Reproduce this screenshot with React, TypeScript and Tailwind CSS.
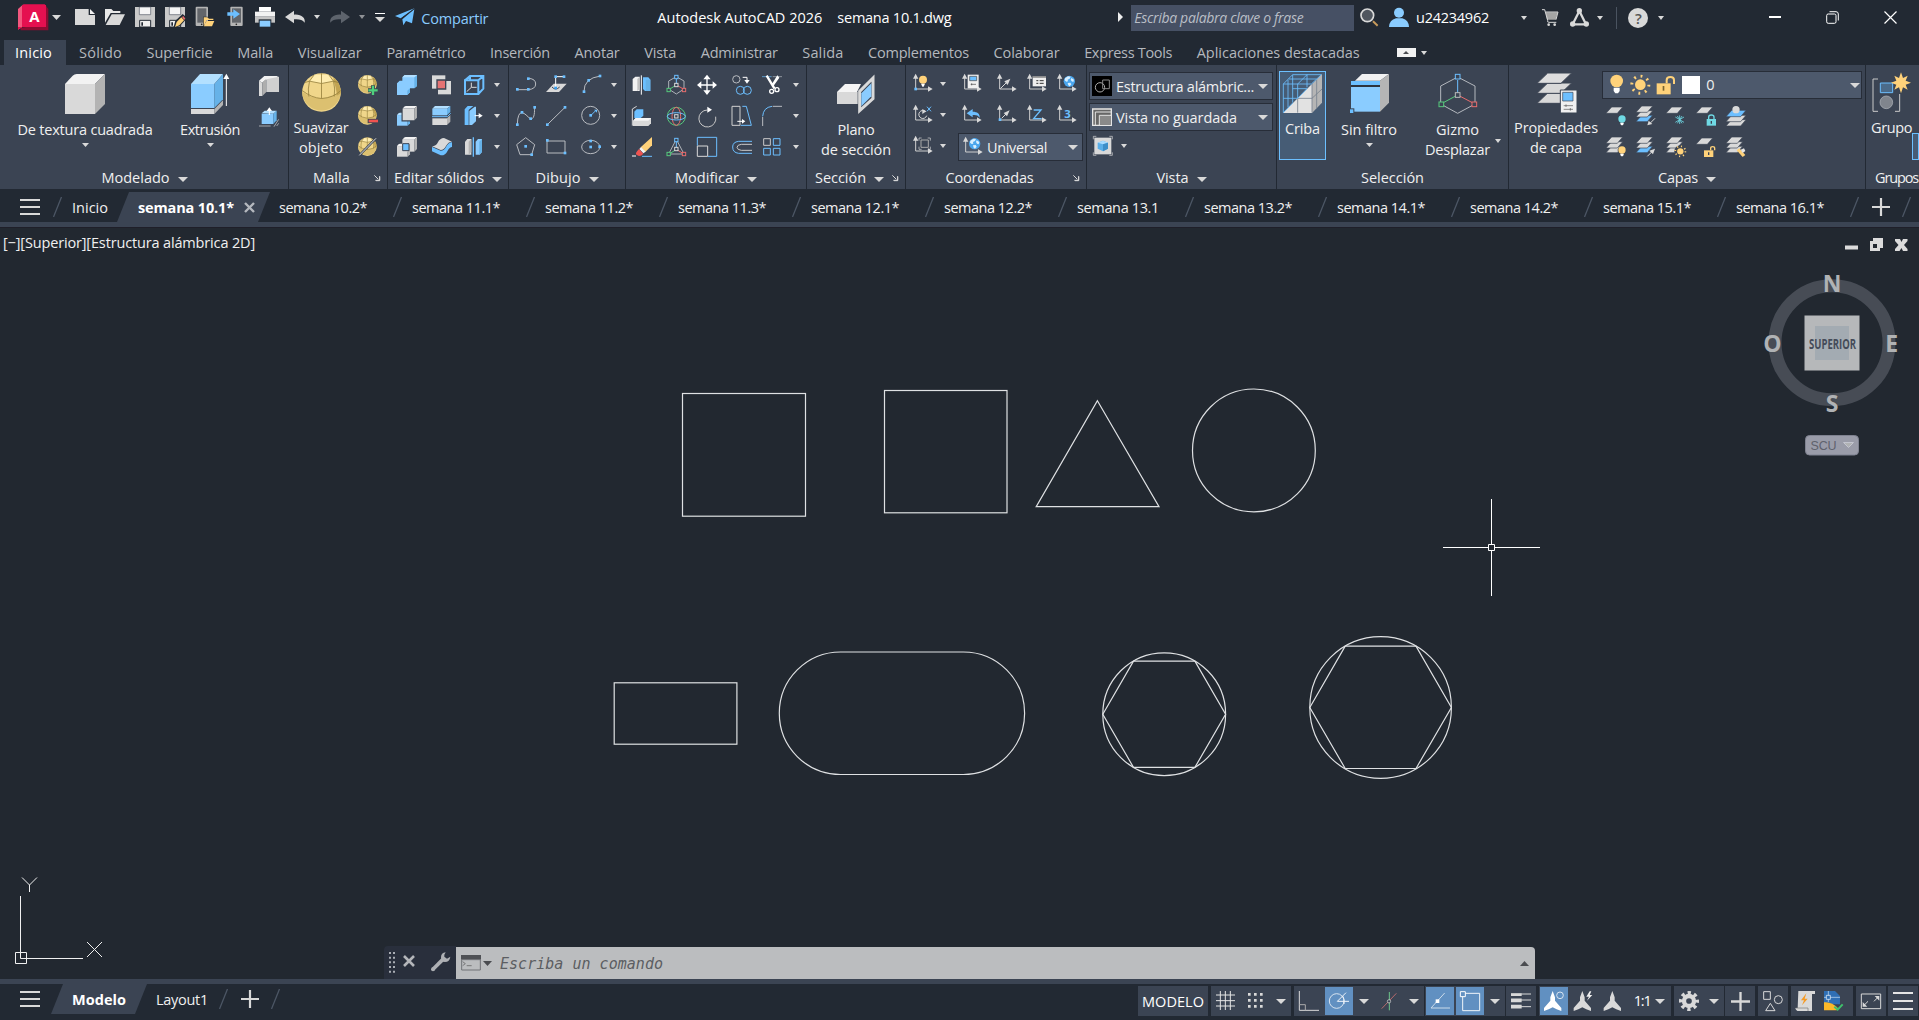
import { useLayoutEffect, useRef } from "react";
import type { ReactNode } from "react";

const G = "#d9d9d9";
const B = "#8accff";
const S = "#6cbfff";
const Y = "#ffd27a";
const R = "#e86c6c";
const N = "#56c97c";

/* Text set to an exact advance width through letter spacing. */
function Fit({ w, className = "", children }: { w: number; className?: string; children: string }) {
  const ref = useRef<HTMLSpanElement>(null);
  useLayoutEffect(() => {
    const el = ref.current;
    if (!el) return;
    el.style.letterSpacing = "0px";
    const natural = el.getBoundingClientRect().width;
    el.style.letterSpacing = `${(w - natural) / children.length}px`;
  }, [w, children]);
  return (
    <span ref={ref} className={"inline-block shrink-0 whitespace-pre " + className}>
      {children}
    </span>
  );
}

/* Icon drawn on a grid three times finer than the page. */
function K({ x, y, w = 60, h = 60, className = "", children }: { x: number; y: number; w?: number; h?: number; className?: string; children: ReactNode }) {
  return (
    <svg width={w / 3} height={h / 3} viewBox={`${x} ${y} ${w} ${h}`} className={"shrink-0 overflow-visible " + className} fill="none" stroke="none">
      {children}
    </svg>
  );
}

function Caret({ className = "h-1 w-[7px]", up = false, dark = false }: { className?: string; up?: boolean; dark?: boolean }) {
  return (
    <svg viewBox="0 0 10 5" preserveAspectRatio="none" className={"shrink-0 " + (dark ? "fill-[#4a4c50] " : "fill-[#d9d9d9] ") + className}>
      <path d={up ? "M0 5L5 0L10 5Z" : "M0 0H10L5 5Z"} />
    </svg>
  );
}

const P = ({ d, f }: { d: string; f: string }) => <path d={d} fill={f} />;
const L = ({ d, c = G, s = 3 }: { d: string; c?: string; s?: number }) => <path d={d} stroke={c} strokeWidth={s} />;
const Dot = ({ x, y, c = S }: { x: number; y: number; c?: string }) => <rect x={x - 4} y={y - 4} width="8" height="8" fill={c} />;
const Sq = ({ x, y, c }: { x: number; y: number; c: string }) => <rect x={x - 5} y={y - 5} width="10" height="10" stroke={c} strokeWidth="3" fill="#3b4453" />;

/* ---------- title bar icons ---------- */
const Logo = () => (
  <K x={54} y={9} w={91} h={81} className="mt-px">
    <P d="M62 88H145V24L136 12V70L62 80Z" f="#8c0c32" />
    <P d="M54 24L70 10V76L54 86Z" f="#f2587f" />
    <P d="M70 10H134L138 14V78H54V86L70 76Z" f="#e51050" />
    <P d="M66 12H138V78H66Z" f="#e51050" />
    <text x="103" y="62" fontSize="45" fontWeight="700" textAnchor="middle" fill="#fff" fontFamily="Open Sans">A</text>
  </K>
);
const NewIcon = () => <K x={225} y={21}><P d="M225 27H266V45H285V75H225Z" f={G} /><P d="M270 27L285 42H270Z" f="#f2f2f2" /></K>;
const OpenIcon = () => <K x={315} y={21}><P d="M315 27H334L340 33H361V39H332L315 68Z" f="#e8e8e8" /><P d="M335 43H375L359 75H317Z" f={G} /></K>;
const SaveBody = ({ x }: { x: number }) => (
  <g>
    <path transform={`translate(${x} 21)`} d="M0 0H60V60H0Z" fill="#c9c9c9" />
    <path transform={`translate(${x} 21)`} d="M13 0H47V23H13Z" fill="#f5f5f5" stroke="#555b66" strokeWidth="2" />
    <path transform={`translate(${x} 21)`} d="M14 40H47V60H14Z" fill="#f0f0f0" stroke="#222933" strokeWidth="3" />
    <path transform={`translate(${x} 21)`} d="M19 46H24V56H19Z" fill="#222933" />
  </g>
);
const SaveIcon = () => <K x={405} y={21}><SaveBody x={405} /></K>;
const SaveAsIcon = () => (
  <K x={495} y={21}>
    <SaveBody x={495} />
    <P d="M520 84L526 62L548 42L562 54L540 78Z" f="#222933" />
    <P d="M525 81L530 66L544 52L552 61L538 76Z" f={Y} />
    <P d="M546 51L550 48L556 56L552 60Z" f={R} />
  </K>
);
const Phone = ({ x }: { x: number }) => (
  <g>
    <rect x={x} y="20" width="37" height="58" rx="3" fill="#b4b4b4" />
    <rect x={x + 5} y="25" width="27" height="43" fill="#62656a" />
    <circle cx={x + 18} cy="73" r="2.500" fill="#222" />
  </g>
);
const PhoneOpen = () => <K x={585} y={21}><Phone x={587} /><path d="M611 52H622L627 56H640V62H643L636 79H611Z" stroke="#222933" strokeWidth="4" /><P d="M611 52H622L627 56H640V60H620L611 78Z" f={Y} /><P d="M620 63H643L636 79H612Z" f={Y} /></K>;
const PhoneSave = () => <K x={675} y={21}><Phone x={691} /><P d="M682 37H700V28L720 42L700 56V47H682Z" f={S} /></K>;
const PrintIcon = () => <K x={765} y={21}><P d="M777 21H813V35H777Z" f="#fff" /><P d="M765 35H825V50H765Z" f="#f2f2f2" /><P d="M765 50H825V68H765Z" f="#c4c4c4" /><P d="M776 58H814V81H776Z" f="#222933" /><P d="M779 62H811V80H779Z" f={B} /></K>;
const UndoIcon = ({ redo = false }: { redo?: boolean }) => (
  <K x={855} y={21} className={redo ? "-scale-x-100" : ""}>
    <P d="M855 51L882 32V44C904 42 917 54 914 68C907 59 898 57 882 58V70Z" f={redo ? "#5d636c" : G} />
  </K>
);
const PlaneIcon = () => <K x={1186} y={24}><P d="M1246 27L1186 51L1203 58ZM1244 31L1208 61L1211 79L1219 66L1237 73Z" f={S} /><L d="M1246 27L1206 58" c="#222933" s={2} /></K>;

/* ---------- modelling icons ---------- */
const CubeIcon = () => <K x={195} y={222} w={120} h={120}><P d="M195 252H285V342H195Z" f={G} /><P d="M195 252L218 227Q223 222 230 222H315L285 252Z" f="#f2f2f2" /><P d="M285 252L315 222V312L285 342Z" f="#b3b3b3" /></K>;
const ExtrudeIcon = () => (
  <K x={570} y={222} w={117} h={120}>
    <P d="M570 252H640V324H570Z" f={B} /><P d="M570 252L597 222H666L640 252Z" f="#b3e0ff" /><P d="M640 252L666 222V298L640 324Z" f="#66b2e8" />
    <P d="M570 327H640V342H570Z" f={G} /><P d="M640 327L666 301V315L640 342Z" f="#b3b3b3" />
    <L d="M676 318V232" c="#fff" /><P d="M667 237L676 221L685 237Z" f="#fff" />
  </K>
);
const PolysolidIcon = () => <K x={777} y={228}><P d="M777 242L793 228H830L837 232L833 240H796L787 248Z" f="#f2f2f2" /><P d="M777 242L787 248V288H777Z" f={G} /><P d="M787 248L799 236V276L787 288Z" f="#aeaeae" /><P d="M799 238L837 230V276H799Z" f="#d0d0d0" /></K>;
const PressIcon = () => <K x={777} y={321}><P d="M785 340L794 332H830L820 341Z" f="#b3e0ff" /><P d="M785 341H820V372H785Z" f={B} /><P d="M820 341L830 332V361L820 372Z" f="#66b2e8" /><L d="M777 378H812M822 380L836 358M830 378L836 370" s={2} /><L d="M808 345V328" c="#fff" /><P d="M800 333L808 322L816 333Z" f="#fff" /></K>;
const Ball = ({ x, y, r }: { x: number; y: number; r: number }) => (
  <g transform={`translate(${x} ${y}) scale(${r / 58})`}>
    <circle r="58" fill="#f0d68a" />
    <path d="M-58 -2Q0 38 58 -6A58 58 0 0 1 -58 -2Z" fill="#dcc070" />
    <path d="M-22 -53L22 -53L36 -34L0 -27L-36 -34Z" fill="#ffedb0" />
    <path d="M36 -34Q44 -18 46 10L58 2A58 58 0 0 0 36 -46Z" fill="#c2a452" />
    <path d="M0 -58V-27V18M-58 -6Q-30 16 0 18Q36 16 58 -6M-50 -30L-36 -34L0 -27L36 -34L50 -30M-36 -34Q-42 -10 -38 12M36 -34Q42 -10 38 12M-22 -53L-36 -34M22 -53L36 -34" stroke="#98823f" strokeWidth={r > 40 ? 2.5 : 4} />
  </g>
);
const SmoothIcon = () => <K x={906} y={219} w={117} h={117}><Ball x={964.5} y={277.5} r={58} /></K>;
const BallAdd = () => <K x={1074} y={225}><Ball x={1102} y={253} r={28} /><L d="M1119 256V286M1104 271H1134" c="#3b4453" s={12} /><L d="M1119 257V285M1105 271H1133" c="#4fd07d" s={7} /></K>;
const BallSub = () => <K x={1074} y={318}><Ball x={1102} y={346} r={28} /><L d="M1103 363H1134" c="#3b4453" s={13} /><L d="M1106 363H1134" c="#ef5350" s={8} /></K>;
const BallCrease = () => <K x={1074} y={411}><Ball x={1102} y={440} r={28} /><L d="M1076 468L1130 413" c="#3b4453" s={7} /><L d="M1078 466L1128 415" c="#ddd" s={3} /></K>;

/* ---------- solid editing icons ---------- */
const Box3 = ({ x, y, s = 36, c = "b" }: { x: number; y: number; s?: number; c?: string }) => {
  const a = c === "b" ? B : G;
  const t = c === "b" ? "#b3e0ff" : "#f2f2f2";
  const d = c === "b" ? "#66b2e8" : "#b3b3b3";
  return (
    <g transform={`translate(${x} ${y}) scale(${s / 36})`}>
      <path d="M0 8H36V44H0Z" fill={a} /><path d="M0 8L5 2Q7 0 10 0H44L36 8Z" fill={t} /><path d="M36 8L44 0V36L36 44Z" fill={d} />
    </g>
  );
};
const UnionIcon = () => <K x={1191} y={225}><P d="M1207 232L1214 225H1251V258L1243 265H1230V277L1222 285H1191V250L1199 242H1207Z" f={B} /><P d="M1243 232L1251 225V258L1243 265Z" f="#66b2e8" /><P d="M1222 272L1230 265V277L1222 285Z" f="#66b2e8" /><P d="M1207 232L1214 225H1251L1243 232Z" f="#b3e0ff" /></K>;
const SubtractIcon = () => <K x={1191} y={318}><Box3 x={1191} y={338} s={32} /><path d="M1207 323L1213 318H1251V352L1243 362H1207Z" fill="#3b4453" stroke="#3b4453" strokeWidth="5" /><Box3 x={1208} y={318} s={35} c="g" /></K>;
const IntersectIcon = () => <K x={1191} y={411}><Box3 x={1207} y={411} c="g" /><Box3 x={1191} y={431} s={32} c="g" /><path d="M1208 431H1227V452H1208Z" fill={S} stroke="#3b4453" strokeWidth="3" /></K>;
const InterfereIcon = () => <K x={1296} y={225}><P d="M1296 226H1336V266H1296Z" f={G} /><P d="M1314 243H1353V283H1314Z" f={G} /><path d="M1311 240H1337V267H1311Z" fill="#e57373" stroke="#3b4453" strokeWidth="4" /></K>;
const SliceIcon = () => <K x={1296} y={318}><P d="M1297 326L1305 318H1351L1341 326Z" f="#b3e0ff" /><P d="M1297 326H1341V346H1297Z" f={B} /><P d="M1341 326L1351 318V336L1341 346Z" f="#66b2e8" /><P d="M1297 355H1341V375H1297Z" f={G} /><P d="M1341 355L1351 345V365L1341 375Z" f="#b3b3b3" /><L d="M1296 350H1342L1352 340" c={S} /></K>;
const ThickenIcon = () => <K x={1296} y={411}><P d="M1296 441L1322 452Q1333 452 1338 441Q1345 427 1356 427V441Q1349 441 1343 452Q1336 467 1322 466L1296 454Z" f={S} /><P d="M1296 439Q1308 438 1313 428Q1320 414 1332 414L1356 425Q1345 425 1338 438Q1332 450 1322 450Z" f={G} /></K>;
const WireBox = () => <K x={1392} y={225}><L d="M1395 241H1435V282H1395ZM1395 241L1410 228H1450V266L1435 282M1450 228L1435 241M1410 228V242" c={S} s={6} /><L d="M1414 248V262L1400 275M1414 262H1430" s={3} /></K>;
const FaceIcon = () => <K x={1392} y={318}><P d="M1394 328L1403 318H1420L1406 330V375H1394Z" f={S} /><P d="M1408 333L1424 320H1428V364L1416 375H1408Z" f={B} /><L d="M1424 347H1440" c="#fff" /><P d="M1436 339L1448 347L1436 355Z" f="#fff" /></K>;
const SepIcon = () => <K x={1392} y={411}><P d="M1395 425L1402 417H1414V464H1395Z" f={G} /><P d="M1406 425L1414 417V456L1406 464Z" f="#b3b3b3" /><P d="M1427 425L1434 417H1446V456L1439 464H1427Z" f={B} /><P d="M1438 425L1446 417V456L1438 464Z" f="#66b2e8" /><L d="M1420 412V470" c={S} s={4} /></K>;

/* ---------- drawing icons ---------- */
const PolylineIcon = () => <K x={47} y={228}><L d="M51 272H84Q106 270 106 255Q106 240 86 238" c="#b9bcc1" /><Dot x={51} y={271} /><Dot x={84} y={271} /><Dot x={84} y={239} /></K>;
const HelixIcon = () => <K x={137} y={228}><P d="M137 279L160 254H199L176 279Z" f={G} /><L d="M166 265V233H190" c="#fff" /><path d="M155 264Q166 276 178 264" stroke="#3b4453" strokeWidth="3" /><Dot x={166} y={267} c="#3aa0f0" /><Dot x={166} y={233} /><Dot x={191} y={233} /></K>;
const ArcIcon = () => <K x={242} y={228}><L d="M251 278Q250 238 300 231" c="#b9bcc1" /><Dot x={251} y={278} /><Dot x={265} y={244} /><Dot x={299} y={231} /></K>;
const SplineIcon = () => <K x={47} y={318}><L d="M51 373Q52 336 66 338C78 342 82 352 92 357C104 356 102 332 103 324" c="#b9bcc1" /><Dot x={51} y={374} /><Dot x={65} y={337} /><Dot x={91} y={356} /><Dot x={103} y={322} /></K>;
const LineIcon = () => <K x={137} y={318}><L d="M141 374L194 322" c="#b9bcc1" /><Dot x={141} y={374} /><Dot x={194} y={322} /></K>;
const CircleIcon = () => <K x={242} y={318}><circle cx="271" cy="346" r="27" stroke="#b9bcc1" strokeWidth="3" /><L d="M271 347L286 332" c={S} /><P d="M281 329H290V338Z" f={S} /><Dot x={271} y={346} /></K>;
const PentagonIcon = () => <K x={47} y={411}><L d="M76 413L103 434L94 464H59L49 434Z" c="#b9bcc1" /><Dot x={76} y={439} /><Dot x={94} y={464} /></K>;
const RectIcon = () => <K x={137} y={411}><L d="M140 423H194V459H140Z" c="#b9bcc1" /><Dot x={141} y={421} /><Dot x={194} y={459} /></K>;
const EllipseIcon = () => <K x={242} y={411}><ellipse cx="271" cy="441" rx="27" ry="20" stroke="#b9bcc1" strokeWidth="3" /><Dot x={271} y={441} /><Dot x={271} y={423} /><Dot x={298} y={440} /></K>;

/* ---------- modify icons ---------- */
const MirrorIcon = () => <K x={396} y={228}><P d="M398 240L406 233H419V276H398Z" f="#f2f2f2" /><P d="M412 240L419 233V270L412 276Z" f="#c0c0c0" /><P d="M429 235H445L451 242V276H435L429 270Z" f={S} /><P d="M437 242H451V276H437Z" f="#66b2e8" /><L d="M424 229V287" c="#fff" /></K>;
const GizmoSmall = () => <K x={501} y={228}><L d="M529 233L552 246V270L529 285L506 270V246Z" c="#aeb2b8" s={3} /><L d="M529 238V258" c={S} /><L d="M529 258L508 271" c={N} /><L d="M529 258L552 271" c={R} /><Sq x={529} y={234} c={S} /><Sq x={506} y={273} c={N} /><Sq x={552} y={273} c={R} /><Sq x={529} y={258} c={G} /></K>;
const GizmoBall = () => <K x={501} y={318}><circle cx="529" cy="349" r="27" stroke={N} strokeWidth="3" /><ellipse cx="529" cy="349" rx="13" ry="27" stroke={R} strokeWidth="3" /><ellipse cx="529" cy="349" rx="27" ry="11" stroke={S} strokeWidth="3" /><Sq x={529} y={349} c={G} /></K>;
const GizmoTri = () => <K x={501} y={411}><L d="M529 418L506 462H552Z" c="#aeb2b8" /><L d="M529 422V448" c={S} /><L d="M529 448L508 462" c={N} /><L d="M529 448L552 462" c={R} /><Sq x={529} y={420} c={S} /><Sq x={506} y={462} c={N} /><Sq x={552} y={462} c={R} /><Sq x={529} y={447} c={G} /></K>;
const MoveIcon = () => <K x={591} y={228}><L d="M621 236V280M600 258H642" c="#fff" s={4} /><P d="M621 227L632 241H610ZM621 288L632 274H610ZM591 258L604 247V269ZM651 258L638 247V269Z" f="#fff" /></K>;
const CopyIcon = () => <K x={696} y={228}><circle cx="709" cy="241" r="11" stroke="#b9bcc1" strokeWidth="3" /><circle cx="721" cy="274" r="12" stroke={S} strokeWidth="3" /><circle cx="742" cy="274" r="12" stroke={S} strokeWidth="3" /><L d="M728 235H741V246" c="#fff" /><P d="M733 243H749L741 254Z" f="#fff" /></K>;
const TrimIcon = () => <K x={786} y={228}><L d="M786 233H815" c={S} s={2} /><L d="M818 233H846" c="#b9bcc1" s={2} /><P d="M797 232L803 228L827 268L820 270ZM832 229L838 236L820 262L814 258Z" f="#fff" /><circle cx="815" cy="277" r="6" stroke="#fff" strokeWidth="4" /><circle cx="831" cy="272" r="6" stroke="#fff" strokeWidth="4" /></K>;
const AlignIcon = () => <K x={396} y={321}><L d="M397 380V330L410 322" /><P d="M403 338L410 331H430V350L422 357H403Z" f={S} /><P d="M399 365L407 357H453V373L445 381H399Z" f={G} /><P d="M399 365L407 357H453L445 365Z" f="#f5f5f5" /></K>;
const RotateIcon = () => <K x={591} y={318}><path d="M647 350A25.500 25.500 0 1 1 622 330" stroke="#c9c9c9" strokeWidth="3" /><P d="M622 320L636 329L622 338Z" f="#fff" /></K>;
const StretchIcon = () => <K x={696} y={321}><L d="M696 322H720V379H696Z" c="#d0d0d0" /><L d="M727 322H739L754 379H722" c={S} /><L d="M712 367H730" c="#fff" /><P d="M726 360L736 367L726 374Z" f="#fff" /></K>;
const FilletIcon = () => <K x={786} y={321}><L d="M818 322H846M788 354V381" c="#b9bcc1" /><L d="M788 352Q790 325 816 322" c={S} /></K>;
const EraseIcon = () => <K x={396} y={411}><P d="M456 411L422 442L436 456L456 436Z" f={Y} /><P d="M423 441L418 447L430 460L437 455Z" f="#f2f2f2" /><P d="M417 447Q402 462 411 465Q420 472 430 461Z" f="#ef5350" /><L d="M396 468H408" c="#fff" /><L d="M426 469H456" c={S} /></K>;
const ScaleIcon = () => <K x={591} y={411}><L d="M592 412H650V469H624M592 412V437" c={S} /><L d="M592 438H623V469H592Z" c={G} /></K>;
const OffsetIcon = () => <K x={696} y={411}><L d="M756 424H716Q698 426 698 441Q698 458 716 460H756" c={S} /><L d="M756 433H724Q712 434 711 442Q712 450 724 451H756" c="#c9c9c9" /></K>;
const ArrayIcon = () => <K x={786} y={411}><L d="M791 416H811V436H791Z" c="#c9c9c9" /><L d="M820 416H840V436H820ZM791 445H811V465H791ZM820 445H840V465H820Z" c={S} /></K>;
const SectionIcon = () => <K x={1012} y={222} w={114} h={120}><P d="M1012 276L1036 252H1084L1072 276Z" f="#f5f5f5" /><P d="M1012 276H1074V312H1012Z" f={G} /><path d="M1080 274L1120 234V296L1080 332Z" fill="#3b4453" stroke={G} strokeWidth="9" /><path d="M1085 280L1115 250V289L1085 319Z" fill={B} /></K>;

/* ---------- UCS icons ---------- */
const Axis = ({ y = 228 }: { y?: number }) => <g transform={`translate(0 ${y})`}><L d="M8 4V43H50" c="#cfcfcf" /><path d="M0 12L8 -3L16 12ZM45 35L59 43L45 51Z" fill={G} /></g>;
const U = ({ children, axis = true }: { children?: ReactNode; axis?: boolean }) => <K x={0} y={0}>{axis && <Axis y={2} />}{children}</K>;
const Globe = ({ x, y }: { x: number; y: number }) => <g><circle cx={x} cy={y} r="17" fill="#4aa6ee" /><path transform={`translate(${x} ${y})`} d="M-13 -9L-4 -15L4 -14L1 -8L-5 -5L-4 0L-9 1L-14 -3ZM6 -10L14 -5L12 2L7 0L4 -5ZM-5 5L3 4L6 9L1 15L-3 12Z" fill="#d8efff" /></g>;
const ucsRows: ReactNode[][] = [
  [
    <U><circle cx="30" cy="17" r="12" fill={Y} /><P d="M24 29H36L32 38H28Z" f="#fff" /><Dot x={8} y={45} /></U>,
    <U><P d="M17 2H50V43H17Z" f="#f0f0f0" /><path d="M23 7H44V20H23Z" fill={S} stroke="#444" strokeWidth="2" /><L d="M26 31H42M29 28V34" c="#444" s={2} /></U>,
    <U><L d="M10 44L32 22" /><P d="M40 14L22 22L32 33Z" f={G} /></U>,
    <U><P d="M17 7H57V37H17Z" f="#efefef" /><P d="M17 7H57V11H17Z" f="#777" /><L d="M28 20H34M38 20H50M28 28H34M38 28H50" c="#333" /></U>,
    <U><Globe x={37} y={22} /></U>,
  ],
  [
    <U><path d="M38 20A12 12 0 1 0 41 32" stroke="#d9d9d9" strokeWidth="3" /><P d="M28 12L40 19L28 27Z" f={G} /><L d="M42 5L54 19M54 5L42 19" c={S} /></U>,
    <U><P d="M14 25L32 12V20C46 20 54 26 53 38C47 30 42 29 32 30V37Z" f={S} /></U>,
    <U><Dot x={9} y={44} /><L d="M14 40L28 26" /><P d="M38 16L20 24L30 34Z" f={G} /></U>,
    <U><L d="M20 15H42L20 41H44" c={S} s={4} /></U>,
    <U><text x="22" y="40" fontSize="34" fontWeight="700" fill={S} fontFamily="Open Sans">3</text></U>,
  ],
  [<U><L d="M24 12H46V34H24Z" c="#aaa" /><L d="M18 14V6H26M44 6H52V14M18 32V40H26M44 40H52V32" c={G} s={2} /></U>],
];

/* ---------- view and selection icons ---------- */
const StyleIcon = () => <K x={576} y={228}><P d="M576 228H636V288H576Z" f="#000" /><circle cx="600" cy="262" r="14" stroke="#aaa" strokeWidth="3" /><L d="M608 240H628V266H608Z" c="#888" s={3} /></K>;
const ViewIcon = () => <K x={576} y={321}><P d="M576 325H636V378H576Z" f="#666" /><L d="M578 327H634V376H578Z" c="#e5e5e5" s={4} /><L d="M586 376V336H634M598 376V346H634" c="#e5e5e5" s={3} /><P d="M600 348H633V374H600Z" f="#8a8a8a" /></K>;
const CubeFrame = () => <K x={579} y={408}><P d="M583 413H634V463H583Z" f={G} /><L d="M580 418V409H589M628 409H637V418M580 457V466H589M628 466H637V457" c={G} s={2} /><P d="M593 428L609 422L624 428V446L609 454L593 446Z" f="#5aaee8" /><P d="M593 428L609 422L624 428L609 433Z" f="#a8dbff" /><P d="M609 433L624 428V446L609 454Z" f="#3d8ec8" /></K>;
const SieveIcon = () => (
  <K x={69} y={222} w={117} h={117}>
    <P d="M113 295L156 252V339H69Z" f="#e2e2e2" /><P d="M156 252L186 222V308L156 339Z" f="#b5b5b5" />
    <L d="M113 295V338M113 295H156L186 267M156 252V338M170 238V325" c="#77818e" s={2.500} />
    <L d="M70 338V252L98 224H184M70 252H154L184 224M113 294V252L141 224M98 224V308M70 295H113M70 338L98 309M86 237H170M141 224V262M84 322V240M113 295L141 266H98" c={S} s={2.500} />
  </K>
);
const FilterIcon = () => <K x={270} y={222} w={117} h={117}><P d="M285 242L306 222H387L360 242Z" f="#f2f2f2" /><P d="M360 242L387 222V308L360 335Z" f="#b5b5b5" /><P d="M273 243H360V335H273Z" f={B} /><P d="M273 243H360V255H273Z" f={S} /><P d="M273 255H360V261H273Z" f="#2c333e" /><P d="M267 325H283V341H267Z" f="#3b4453" /><P d="M270 328H280V339H270Z" f={S} /></K>;
const GizmoIcon = () => <K x={533} y={222} w={120} h={120}><L d="M592 231L644 258V312L592 340L541 312V258Z" c="#b4b8be" /><L d="M592 240V280" c={S} /><L d="M586 288L549 308" c={N} /><L d="M598 288L636 308" c={R} />{[[592, 230, S], [592, 285, "#bbb"], [543, 313, N], [642, 313, R]].map(([a, b, c]) => <rect key={`${a}-${b}`} x={Number(a) - 7} y={Number(b) - 7} width="14" height="14" fill="#3b4453" stroke={String(c)} strokeWidth="3" />)}</K>;

/* ---------- layer icons ---------- */
const Sheet = ({ y, c = G, x = 0, w = 50 }: { y: number; c?: string; x?: number; w?: number }) => <path d={`M${x + 17} ${y}H${x + w}L${x + w - 16} ${y + 19}H${x}Z`} fill={c} stroke="#3b4453" strokeWidth="2" />;
const Bulb = ({ x, y, c, r = 11 }: { x: number; y: number; c: string; r?: number }) => <g><circle cx={x} cy={y} r={r + 2} fill="#3b4453" /><circle cx={x} cy={y} r={r} fill={c} /><path d={`M${x - 5} ${y + r}h10v4l-3 4h-4l-3 -4z`} fill="#fff" /></g>;
const Sun = ({ x, y, r = 9 }: { x: number; y: number; r?: number }) => <g><circle cx={x} cy={y} r={r} fill={Y} /><circle cx={x} cy={y} r={r * 1.6} stroke={Y} strokeWidth={r * 0.55} strokeDasharray={`${r * 0.35} ${r * 0.906}`} /></g>;
const Stack = ({ last = G }: { last?: string }) => <g><Sheet y={28} c={last} /><Sheet y={14} /><Sheet y={0} /></g>;
const Lock = ({ x, y, c, open = false }: { x: number; y: number; c: string; open?: boolean }) => <g><path d={`M${x} ${y}h28v20h-28z`} fill={c} /><path d={open ? `M${x + 20} ${y}v-6q0 -5 6 -5t6 5v6` : `M${x + 6} ${y}v-6q0 -6 8 -6t8 6v6`} stroke={c} strokeWidth="4" /><path d={`M${x + 12} ${y + 6}h4v8h-4z`} fill="#3b4453" /></g>;
const layerRows: ReactNode[][] = [
  [
    <U axis={false}><Sheet y={3} /><Bulb x={48} y={39} c="#6fd9e4" /></U>,
    <U axis={false}><Stack last={S} /><L d="M57 37L42 52" /><P d="M34 58L38 44L49 54Z" f={G} /></U>,
    <U axis={false}><Sheet y={3} /><L d="M41 28V54M28 33L54 49M54 33L28 49M34 30L48 52M48 30L34 52" c="#6fd9e4" s={2.500} /></U>,
    <U axis={false}><Sheet y={3} /><Lock x={32} y={39} c="#6fd9e4" /></U>,
    <U axis={false}><Sheet y={41} w={60} /><Sheet y={28} w={60} /><Sheet y={13} w={60} c={S} /><circle cx="30" cy="11" r="11" fill={G} /></U>,
  ],
  [
    <U axis={false}><Stack /><Bulb x={48} y={39} c={Y} /></U>,
    <U axis={false}><Stack last={S} /><L d="M34 58L48 44" /><P d="M57 35L40 41L51 52Z" f={G} /></U>,
    <U axis={false}><Stack /><circle cx="43" cy="43" r="18" fill="#3b4453" /><Sun x={43} y={43} r={9.5} /></U>,
    <U axis={false}><Sheet y={3} /><Lock x={24} y={40} c={Y} open /></U>,
    <U axis={false}><Stack /><P d="M32 40L40 34L58 54L50 60Z" f={Y} /><P d="M44 38L54 34L58 42L50 48Z" f="#e5e5e5" /></U>,
  ],
];
const LayerProps = () => (
  <K x={828} y={219} w={120} h={120}>
    {[278, 248, 219].map((y) => <path key={y} d={`M860 ${y}H932L900 ${y + 31}H828Z`} transform={y === 219 ? "" : "translate(0 1)"} fill={y === 219 ? "#dedede" : G} stroke="#3b4453" strokeWidth="3" />)}
    <path d="M898 270H948V339H898Z" fill="#f0f0f0" stroke="#3b4453" strokeWidth="3" />
    <path d="M905 277H936V303H905Z" fill={S} stroke="#3b4453" strokeWidth="2" />
    <L d="M908 317H936M908 328H936M915 313V321M928 324V332" c="#555" s={2} />
  </K>
);
const GroupIcon = () => (
  <K x={936} y={222} w={120} h={120}>
    <L d="M954 240H939V337H954M1005 337H1019V285" c="#c9c9c9" />
    <path d="M961 252H998V281H961Z" fill="#4b6b8a" stroke={S} strokeWidth="3" />
    <circle cx="979" cy="310" r="19" fill="#80858d" stroke="#b4b8be" strokeWidth="2" />
    <P d="M1023 220L1029 237L1043 230L1037 245L1053 251L1037 257L1043 272L1029 265L1023 283L1017 265L1003 272L1009 257L993 251L1009 245L1003 230L1017 237Z" f={Y} />
  </K>
);

/* ---------- ribbon building blocks ---------- */
function Panel({ className, label, lw, arrow = true, launcher = false, children }: { className: string; label: string; lw: number; arrow?: boolean; launcher?: boolean; children: ReactNode }) {
  return (
    <section className={"flex h-[124px] shrink-0 flex-col border-r-[1px] border-[#222933] " + className}>
      <div className="flex h-[103px] w-full items-start">{children}</div>
      <div className="flex h-5 w-full items-center">
        <div className="flex flex-1 items-center justify-center gap-2">
          <Fit w={lw}>{label}</Fit>
          {arrow && <Caret className="mt-0.5 h-[5px] w-2.5" />}
        </div>
        {launcher && (
          <K x={0} y={0} w={18} h={18} className="mr-[7px]">
            <L d="M1 1L13 13M17 3V16H4M17 6V17H6" s={3} />
          </K>
        )}
      </div>
    </section>
  );
}

function Big({ className, icon, lines, drop = false, tight = false }: { className: string; icon: ReactNode; lines: [string, number][]; drop?: boolean; tight?: boolean }) {
  return (
    <div className={"flex shrink-0 flex-col items-center pt-[9px] " + className}>
      <div className={(tight ? "mb-[5px]" : "mb-1.5") + " flex h-10 items-start justify-center"}>{icon}</div>
      {lines.map(([t, w]) => <Fit key={t} w={w} className="h-5 leading-5">{t}</Fit>)}
      {drop && <Caret className="mt-[3px] h-1 w-[7px]" />}
    </div>
  );
}

function Tools({ className, items }: { className: string; items: ReactNode[] }) {
  return (
    <div className={"grid auto-rows-[31px] items-start pt-2.5 " + className}>
      {items.map((it, i) => <div key={i}>{it}</div>)}
    </div>
  );
}

const Drop = () => <Caret className="mt-2 h-1 w-1.5" />;

function Combo({ className, icon, label, w }: { className: string; icon: ReactNode; label: string; w: number }) {
  return (
    <div className={"flex h-7 shrink-0 items-center border border-[#272d38] bg-[#4d596c] " + className}>
      {icon}
      <Fit w={w} className="mt-px ml-1">{label}</Fit>
      <Caret className="mr-1 ml-auto h-[5px] w-2.5" />
    </div>
  );
}

const ribbonTabs: [string, number][] = [
  ["Sólido", 43], ["Superficie", 66], ["Malla", 36], ["Visualizar", 64], ["Paramétrico", 79], ["Inserción", 60], ["Anotar", 45], ["Vista", 32],
  ["Administrar", 77], ["Salida", 41], ["Complementos", 101], ["Colaborar", 66], ["Express Tools", 88], ["Aplicaciones destacadas", 163],
];
const docTabs = ["11.1*", "11.2*", "11.3*", "12.1*", "12.2*", "13.1", "13.2*", "14.1*", "14.2*", "15.1*", "16.1*"];

const Slash = ({ className = "" }: { className?: string }) => (
  <svg width="9" height="20" viewBox="0 0 9 20" className={"shrink-0 " + className}><path d="M0.500 20L8.500 0" stroke="#4c5665" strokeWidth="1.300" /></svg>
);
const Menu = ({ className = "" }: { className?: string }) => (
  <div className={"flex w-5 shrink-0 flex-col gap-[5px] " + className}>
    <div className="h-0.5 bg-[#d9d9d9]" /><div className="h-0.5 bg-[#d9d9d9]" /><div className="h-0.5 bg-[#d9d9d9]" />
  </div>
);
const Plus = ({ className = "" }: { className?: string }) => (
  <svg width="18" height="18" viewBox="0 0 18 18" className={"shrink-0 " + className}><path d="M9 0V18M0 9H18" stroke="#d9d9d9" strokeWidth="2.200" /></svg>
);

function TitleBar() {
  return (
    <header className="flex h-10 items-start">
      <div className="flex h-[34px] items-center">
        <div className="ml-[18px]"><Logo /></div>
        <Caret className="ml-1 h-[5px] w-[9px]" />
        <div className="ml-3.5 flex gap-2.5"><NewIcon /><OpenIcon /><SaveIcon /><SaveAsIcon /><PhoneOpen /><PhoneSave /><PrintIcon /><UndoIcon /></div>
        <Caret className="ml-[9px] h-1 w-1.5" />
        <div className="ml-[10px]"><UndoIcon redo /></div>
        <Caret className="ml-[9px] h-1 w-1.5 opacity-60" />
        <div className="ml-2.5 flex w-2.5 flex-col gap-[3px]"><div className="h-px bg-white" /><Caret className="h-[5px] w-2.5" /></div>
        <div className="ml-2.5"><PlaneIcon /></div>
        <Fit w={67} className="mt-[3px] ml-1.5 text-[#8accff]">Compartir</Fit>
        <Fit w={165} className="mt-px ml-[169px] text-white">Autodesk AutoCAD 2026</Fit>
        <Fit w={114} className="mt-px ml-[15px] text-white">semana 10.1.dwg</Fit>
        <svg width="5" height="10" viewBox="0 0 5 10" className="ml-[167px] shrink-0"><path d="M0 0L5 5L0 10Z" fill="#eee" /></svg>
      </div>
      <div className="mt-[5px] ml-2 flex h-[26px] w-[223px] items-center bg-[#465064] pl-[3px]">
        <Fit w={169} className="text-sm text-[#b9bec6] italic">Escriba palabra clave o frase</Fit>
      </div>
      <div className="flex h-[34px] items-center pt-px">
        <K x={299} y={26} w={56} h={56} className="ml-[6px]"><circle cx="321" cy="48" r="19" stroke={G} strokeWidth="5" fill="#50565f" /><L d="M338 66L352 79" c="#c79a5b" s={6} /></K>
        <K x={387} y={24} className="ml-[10px]"><circle cx="417" cy="38" r="15" fill={B} /><P d="M387 81Q388 60 408 55H427Q446 60 447 81Z" f={B} /></K>
        <Fit w={73} className="mt-px ml-[7px] text-white">u24234962</Fit>
        <Caret className="ml-8 h-1 w-1.5" />
        <K x={849} y={28} w={49} h={54} className="ml-[15px]"><P d="M860 38H896L890 60H864Z" f="#a5a5a5" /><L d="M849 30H857L866 62Q864 68 870 68H892" c={G} s={3} /><L d="M860 37H897L891 60" c={G} s={3} /><circle cx="869" cy="75" r="4" fill={G} /><circle cx="887" cy="75" r="4" fill={G} /></K>
        <K x={933} y={23} w={57} h={57} className="ml-3"><path d="M961 32L981 72H941Z" stroke={G} strokeWidth="7" /><circle cx="961" cy="31" r="8" fill={G} /><circle cx="941" cy="71" r="8" fill={G} /><circle cx="982" cy="71" r="8" fill={G} /></K>
        <Caret className="ml-2 h-1 w-1.5" />
        <div className="ml-[13px] h-[22px] w-px bg-[#4a5360]" />
        <div className="ml-[11px] flex size-5 items-center justify-center rounded-full bg-[#d9d9d9] text-[15px] font-semibold text-[#555]">?</div>
        <Caret className="ml-2.5 h-1 w-1.5" />
        <div className="mb-px ml-[105px] h-[1.500px] w-3 bg-white" />
        <svg width="13" height="13" viewBox="0 0 13 13" className="ml-[45px]" fill="none" stroke="#fff"><rect x="0.700" y="3" width="9.300" height="9.300" rx="1.500" /><path d="M3.500 0.700H10Q12.300 0.700 12.300 3V9.500" /></svg>
        <svg width="13" height="13" viewBox="0 0 13 13" className="ml-[45px]" stroke="#fff" strokeWidth="1.200"><path d="M0.500 0.500L12.500 12.500M12.500 0.500L0.500 12.500" /></svg>
      </div>
    </header>
  );
}

function Ribbon() {
  return (
    <div className="flex h-[124px] overflow-hidden bg-[#3b4453] pl-px">
      <Panel className="w-72" label="Modelado" lw={68}>
        <Big className="ml-[17px] w-[134px]" icon={<CubeIcon />} lines={[["De textura cuadrada", 135]]} drop />
        <Big className="ml-[28px] w-[60px]" icon={<ExtrudeIcon />} lines={[["Extrusión", 60]]} drop />
        <div className="ml-[19px] flex flex-col gap-[11px] pt-[11px]"><PolysolidIcon /><PressIcon /></div>
      </Panel>
      <Panel className="w-[99px]" label="Malla" lw={37} arrow={false} launcher>
        <Big tight className="ml-[4px] w-[56px] -mt-px" icon={<SmoothIcon />} lines={[["Suavizar", 55], ["objeto", 44]]} />
        <Tools className="ml-[9px] grid-cols-[20px]" items={[<BallAdd />, <BallSub />, <BallCrease />]} />
      </Panel>
      <Panel className="w-[121px]" label="Editar sólidos" lw={90}>
        <Tools className="ml-[9px] grid-cols-[35px_32px_30px_8px]" items={[<UnionIcon />, <InterfereIcon />, <WireBox />, <Drop />, <SubtractIcon />, <SliceIcon />, <FaceIcon />, <Drop />, <IntersectIcon />, <ThickenIcon />, <SepIcon />, <Drop />]} />
      </Panel>
      <Panel className="w-[117px]" label="Dibujo" lw={45}>
        <Tools className="ml-[7px] grid-cols-[30px_35px_30px_8px]" items={[<PolylineIcon />, <HelixIcon />, <ArcIcon />, <Drop />, <SplineIcon />, <LineIcon />, <CircleIcon />, <Drop />, <PentagonIcon />, <RectIcon />, <EllipseIcon />, <Drop />]} />
      </Panel>
      <Panel className="w-[181px]" label="Modificar" lw={64}>
        <Tools className="ml-1.5 grid-cols-[35px_30px_35px_30px_31px_8px]" items={[<MirrorIcon />, <GizmoSmall />, <MoveIcon />, <CopyIcon />, <TrimIcon />, <Drop />, <AlignIcon />, <GizmoBall />, <RotateIcon />, <StretchIcon />, <FilletIcon />, <Drop />, <EraseIcon />, <GizmoTri />, <ScaleIcon />, <OffsetIcon />, <ArrayIcon />, <Drop />]} />
      </Panel>
      <Panel className="w-[99px]" label="Sección" lw={51} launcher>
        <Big className="w-full" icon={<SectionIcon />} lines={[["Plano", 37], ["de sección", 70]]} />
      </Panel>
      <Panel className="w-[181px]" label="Coordenadas" lw={88} arrow={false} launcher>
        <div className="flex flex-col gap-[11px] pt-[9px] pl-[7px]">
          {ucsRows.map((row, r) => (
            <div key={r} className="flex h-5 items-center">
              {row[0]}
              <Caret className="mx-[7px] h-1 w-1.5" />
              {row.length > 1 ? (
                <div className="ml-[9px] grid grid-cols-[35px_30px_30px_20px]">{row.slice(1).map((c, i) => <div key={i}>{c}</div>)}</div>
              ) : (
                <Combo className="mt-0.5 ml-[5px] w-[125px]" icon={<div className="ml-1"><U><Globe x={35} y={20} /></U></div>} label="Universal" w={60} />
              )}
            </div>
          ))}
        </div>
      </Panel>
      <Panel className="w-[190px]" label="Vista" lw={32}>
        <div className="flex flex-col pt-[7px] pl-0.5">
          <Combo className="w-[184px]" icon={<div className="ml-0.5"><StyleIcon /></div>} label="Estructura alámbric..." w={138} />
          <Combo className="mt-[3px] w-[184px]" icon={<div className="ml-0.5"><ViewIcon /></div>} label="Vista no guardada" w={121} />
          <div className="mt-[5px] ml-1 flex items-center gap-2"><CubeFrame /><Caret className="h-1 w-1.5" /></div>
        </div>
      </Panel>
      <Panel className="w-[232px]" label="Selección" lw={63} arrow={false}>
        <div className="mt-1.5 ml-0.5 flex h-[89px] w-[47px] shrink-0 flex-col items-center border border-[#6cc0ff] bg-[#465c75] pt-0.5">
          <SieveIcon />
          <Fit w={35} className="mt-[6px] leading-5">Criba</Fit>
        </div>
        <Big className="ml-[15px] w-14" icon={<FilterIcon />} lines={[["Sin filtro", 56]]} drop />
        <Big className="ml-[27px] w-[67px]" icon={<GizmoIcon />} lines={[["Gizmo", 43], ["Desplazar", 65]]} />
        <Caret className="mt-[74px] ml-[4px] h-1 w-1.5" />
      </Panel>
      <Panel className="w-[357px]" label="Capas" lw={40}>
        <Big tight className="-mt-px ml-1 w-[86px]" icon={<div className="pl-0.5"><LayerProps /></div>} lines={[["Propiedades", 84], ["de capa", 52]]} />
        <div className="ml-[3px] flex flex-col pt-1.5">
          <div className="flex h-7 w-[260px] items-center border border-[#272d38] bg-[#4d596c]">
            <K x={150} y={228} w={40} h={60} className="ml-[7px]"><circle cx="170" cy="246" r="19" fill={Y} /><P d="M161 266H179V276L174 283H166L161 276Z" f="#fff" /></K>
            <K x={213} y={225} w={57} h={60} className="ml-[8px]"><Sun x={241} y={254} r={16} /></K>
            <K x={286} y={225} w={57} h={60} className="ml-1.5"><P d="M288 250H330V283H288Z" f={Y} /><L d="M318 250V240Q318 231 329 231T340 240V252" c={Y} s={6} /><P d="M306 258H311V272H306Z" f="#7a6430" /></K>
            <div className="ml-[7px] size-[18px] bg-white" />
            <span className="ml-1.5">0</span>
            <Caret className="mr-px ml-auto h-[5px] w-2.5" />
          </div>
          <div className="mt-[7px] ml-1 grid auto-rows-[31px] grid-cols-[30px_30px_30px_30px_20px]">
            {layerRows.flat().map((c, i) => <div key={i}>{c}</div>)}
          </div>
        </div>
      </Panel>
      <section className="flex w-[53px] shrink-0 flex-col overflow-hidden pl-[5px]">
        <div className="flex h-[103px]">
          <Big tight className="-mt-px w-[41px]" icon={<GroupIcon />} lines={[["Grupo", 41]]} />
          <div className="mt-[68px] h-[27px] w-2 border border-[#6cc0ff] bg-[#465c75]" />
        </div>
        <Fit w={43} className="ml-[4px] self-start leading-5">Grupos</Fit>
      </section>
    </div>
  );
}

function DocTabs() {
  return (
    <nav className="flex h-[33px] items-center pt-[3px] text-[#f0f0f0]">
      <Menu className="ml-5" />
      <Slash className="ml-[13px]" />
      <Fit w={36} className="mt-px ml-2.5">Inicio</Fit>
      <div className="ml-[9px] flex h-[30px] w-[153px] items-center bg-[#3b4453] pl-[21px] [clip-path:polygon(12px_0,100%_0,141px_100%,0_100%)]">
        <Fit w={96} className="mt-px font-bold text-white">semana 10.1*</Fit>
        <svg width="11" height="11" viewBox="0 0 11 11" className="ml-[10px]"><path d="M1 1L10 10M10 1L1 10" stroke="#b4b8be" strokeWidth="2.400" /></svg>
      </div>
      <Fit w={88} className="mt-px ml-[9px]">semana 10.2*</Fit>
      {docTabs.map((t) => (
        <div key={t} className="flex items-center">
          <Slash className="ml-[26px]" />
          <Fit w={t.endsWith("*") ? 88 : 82} className="mt-px ml-2.5">{"semana " + t}</Fit>
        </div>
      ))}
      <Slash className="ml-[26px]" />
      <Plus className="ml-[13px]" />
      <Slash className="ml-3" />
    </nav>
  );
}

function Drawing() {
  return (
    <svg className="absolute inset-0" width="1919" height="752" viewBox="0 227 1919 752" fill="none" stroke="#dfe1e3" strokeWidth="1.200">
      <rect x="682.500" y="393.500" width="123" height="122.700" />
      <rect x="884.500" y="390.500" width="122.500" height="122.300" />
      <path d="M1097.400 400.800L1159 506.600H1036.200Z" />
      <circle cx="1253.900" cy="450.400" r="61.400" />
      <rect x="614.200" y="682.800" width="122.700" height="61.400" />
      <rect x="779.300" y="652" width="245.300" height="122.500" rx="61.250" />
      <circle cx="1164.200" cy="714.200" r="61.400" />
      <path d="M1102.800 714.200L1133.500 661.200H1194.900L1225.600 714.200L1194.900 767.400H1133.500Z" />
      <circle cx="1380.600" cy="707.500" r="70.800" />
      <path d="M1309.800 707.500L1345.200 646.200H1416L1451.400 707.500L1416 768.500H1345.200Z" />
      <path d="M1443 547.500H1488.500M1494.500 547.500H1540M1491.500 499V544.500M1491.500 550.500V596M1488.500 544.500H1494.500V550.500H1488.500Z" stroke="#fff" strokeWidth="1" />
      <path d="M20.500 896V958.500H83M15.500 952.500H26.500V963.500H15.500ZM22 877.500L29.500 885L37 877.500M29.500 885V892M87 942L102 957M102 942L87 957" stroke="#f0f0f0" strokeWidth="1" />
      <g fontFamily="Open Sans" fontWeight="700" fontSize="23" textAnchor="middle" fill="#b0b2b4" stroke="none">
        <circle cx="1832" cy="342.700" r="57" fill="none" stroke="#474c55" strokeWidth="13" />
        <text x="1832" y="292">N</text>
        <text x="1832" y="411.500">S</text>
        <text x="1772.300" y="351.500">O</text>
        <text x="1891.700" y="351.500">E</text>
        <rect x="1804.500" y="315.500" width="55" height="55" fill="#b6b8ba" />
        <rect x="1815" y="326" width="34" height="34" fill="#a3abb2" />
        <text x="1809" y="348.500" fontSize="14" textAnchor="start" fill="#454b59" textLength="47" lengthAdjust="spacingAndGlyphs">SUPERIOR</text>
        <rect x="1805.500" y="435.500" width="53" height="19.500" rx="4" fill="#9a9ca9" stroke="#7f8290" strokeWidth="1" />
        <text x="1810.500" y="449.800" fontFamily="Liberation Sans" fontWeight="400" fontSize="12.500" textAnchor="start" fill="#5f626d" textLength="26">SCU</text>
        <path d="M1843.500 442.500H1853.500L1848.500 447.500Z" stroke="#c3c5cf" strokeWidth="1" />
      </g>
      <g stroke="none" fill="#dcdcdc">
        <rect x="1845" y="245.500" width="13" height="4" />
        <path fillRule="evenodd" d="M1873 238H1883V248H1880V251H1870V241H1873ZM1873 244V248H1877V244Z" />
        <path d="M1895 239H1900L1901.500 242L1903 239H1907.500V241L1904 245L1907.500 249V251H1903L1901.500 248L1899.500 251H1895V249L1898.500 245L1895 241Z" />
      </g>
    </svg>
  );
}

function CommandLine() {
  return (
    <div className="absolute bottom-0 left-96 flex h-[33px] w-[1151px] items-stretch">
      <div className="flex w-[72px] items-center rounded-tl bg-[#292f3c]">
        <K x={1167} y={276} w={18} h={64} className="ml-[5px]">
          {[0, 1, 2, 3, 4].map((i) => <path key={i} d={`M1167 ${276 + i * 14}h6v6h-6zM1179 ${276 + i * 14}h6v6h-6z`} fill="#a9adb4" />)}
        </K>
        <svg width="12" height="12" viewBox="0 0 12 12" className="mb-[3px] ml-2"><path d="M1 1L11 11M11 1L1 11" stroke="#b4b6ba" strokeWidth="2.600" /></svg>
        <K x={1292} y={276} w={58} h={58} className="mb-0.5 ml-4"><L d="M1298 328L1330 296" c="#aeb0b4" s={11} /><P d="M1336 277Q1322 278 1322 292Q1322 306 1334 306Q1348 306 1350 290L1340 296L1332 290V284Z" f="#aeb0b4" /><circle cx="1298" cy="328" r="6" fill="#aeb0b4" /></K>
      </div>
      <div className="mt-px flex flex-1 items-center rounded-tr bg-[#bbbdbf]">
        <K x={1383} y={285} w={60} h={48} className="ml-[5px]"><P d="M1383 285H1443V299H1383Z" f="#4f5155" /><path d="M1385 299H1441V330H1385Z" stroke="#717377" strokeWidth="3" /><L d="M1388 305L1396 311L1388 317M1400 317H1415" c="#555" s={2} /></K>
        <Caret dark className="ml-0.5 h-[5px] w-[9px]" />
        <Fit w={163} className="mt-px ml-2 font-['DejaVu_Sans_Mono',monospace] text-[15px] text-[#5c5e62] italic">Escriba un comando</Fit>
        <Caret up dark className="mr-1.5 ml-auto h-[5px] w-[9px]" />
      </div>
    </div>
  );
}

const cell = "flex h-[30px] shrink-0 items-center bg-[#3b4453]";
const active = "flex h-7 w-7 shrink-0 items-center justify-center bg-[#6190c1]";
const Down = ({ className }: { className: string }) => <Caret className={"h-[5px] w-2.5 " + className} />;
const Ship = ({ x, c = G }: { x: number; c?: string }) => <P d={`M${x} 183L${x + 7} 202V212L${x + 26} 234V243L${x + 12} 238L${x} 232L${x - 12} 238L${x - 26} 243V234L${x - 7} 212V202Z`} f={c} />;

function StatusBar() {
  return (
    <footer className="flex h-9 items-start text-[#f0f0f0]">
      <div className="flex h-[30px] w-[1138px] items-center">
        <Menu className="ml-5" />
        <div className="ml-[11px] flex h-[30px] w-24 items-center bg-[#3b4453] pl-[21px] [clip-path:polygon(12px_0,100%_0,84px_100%,0_100%)]">
          <Fit w={54} className="mt-px font-bold text-white">Modelo</Fit>
        </div>
        <Fit w={52} className="mt-px ml-[9px]">Layout1</Fit>
        <Slash className="ml-[11px]" />
        <Plus className="ml-[13px]" />
        <Slash className="ml-3" />
      </div>
      <div className="mt-0.5 flex">
        <div className={cell + " w-[70px] justify-center"}><Fit w={62} className="mt-px text-white">MODELO</Fit></div>
        <div className={cell + " ml-[3px] w-20"}>
          <K x={288} y={183} className="ml-[5px]"><L d="M288 195H345M288 212H345M288 228H345M301 183V240M316 183V240M331 183V240" c="#e5e5e5" /></K>
          <K x={384} y={186} w={45} h={54} className="ml-3">{[189, 207, 225].map((y) => <path key={y} d={`M384 ${y}h8v8h-8zM402 ${y}h8v8h-8zM420 ${y}h8v8h-8z`} fill={G} />)}</K>
          <Down className="ml-[13px]" />
        </div>
        <div className={cell + " ml-[3px] w-[130px]"}>
          <K x={537} y={183} className="ml-[5px]"><L d="M538 183V241H597" /><L d="M538 224H556V241" c="#aaa" /></K>
          <div className={active + " ml-1.5"}><K x={627} y={183}><circle cx="650" cy="213" r="22" stroke="#d8e4f0" strokeWidth="3" /><L d="M687 214H652L678 188M668 198Q674 206 672 222" c="#f0f5fa" /></K></div>
          <Down className="ml-1.5" />
          <K x={783} y={185} w={48} h={57} className="ml-3"><L d="M785 235L829 189" c="#b86a6e" /><L d="M808 185V240" c="#6cc58a" /><circle cx="807" cy="213" r="5" fill="#3b4453" stroke="#ddd" strokeWidth="2" /></K>
          <Down className="ml-3" />
        </div>
        <div className={cell + " ml-px w-20"}>
          <div className={active + " ml-px"}><K x={930} y={183}><L d="M990 234H933L974 189" c="#cbdbea" /><P d="M947 208H958V219H947Z" f="#fff" /></K></div>
          <div className={active + " ml-0.5"}><K x={1020} y={183}><L d="M1028 190H1079V242H1028Z" c="#f0f5fa" /><path d="M1021 185H1036V200H1021Z" fill="#6190c1" stroke="#fff" strokeWidth="3" /></K></div>
          <Down className="ml-1.5" />
        </div>
        <div className={cell + " ml-px w-[30px] justify-center"}><K x={1173} y={186} h={54}><L d="M1173 192H1233M1173 210H1233M1173 230H1233" /><L d="M1173 194H1205" s={8} /><L d="M1173 211H1205M1173 230H1205" s={11} /></K></div>
        <div className={cell + " ml-[3px] w-[132px]"}>
          <div className={active + " ml-px"}><K x={132} y={183}><Ship x={158} c="#fff" /><circle cx="180" cy="196" r="10" stroke="#d8e4f0" strokeWidth="3" /></K></div>
          <K x={220} y={183} w={58} className="ml-[5px]"><Ship x={248} /><P d="M270 184L260 200H268L262 212L278 195H270L275 184Z" f="#f0f0f0" /></K>
          <K x={315} y={183} w={52} className="ml-3"><Ship x={340} /></K>
          <Fit w={17} className="ml-3 text-white">1:1</Fit>
          <Down className="ml-1" />
        </div>
        <div className={cell + " ml-[3px] w-[50px]"}>
          <K x={537} y={183} className="ml-[5px]"><circle cx="567" cy="213" r="15" stroke={G} strokeWidth="13" /><circle cx="567" cy="213" r="24" stroke={G} strokeWidth="12" strokeDasharray="9.500 9.350" strokeDashoffset="4.750" /></K>
          <Down className="ml-2.5" />
        </div>
        <div className={cell + " ml-px w-[30px] justify-center"}><Plus className="size-[19px]" /></div>
        <div className={cell + " ml-[3px] w-[30px] justify-center"}><K x={789} y={183}><L d="M791 185H811V208H791Z" /><circle cx="835" cy="209" r="12" stroke={G} strokeWidth="3" /><L d="M811 220L825 242H797Z" /></K></div>
        <div className={cell + " ml-[3px] w-[62px]"}>
          <K x={888} y={183} w={57} className="ml-[5px]"><P d="M895 183H945V192H936V243H892Q886 238 886 234H893Z" f={G} /><L d="M887 234H924V243" c="#777" s={2} /><P d="M919 190L903 211H912L906 226L923 206H914Z" f="#f59a23" /></K>
          <K x={972} y={183} w={58} className="ml-[9px]"><P d="M972 183H1005L1020 198V223H972Z" f="#2f6fb5" /><P d="M972 217Q994 214 1016 236L1010 241H972Z" f="#fbb829" /><L d="M972 202H1020M985 183V216" c="#cfe4f7" s={2} /><path d="M979 196H991V208H979Z" fill="#2f6fb5" stroke="#fff" strokeWidth="2" /><L d="M1003 230L1013 239L1028 223" c="#3fc06b" s={6} /></K>
        </div>
        <div className={cell + " ml-[3px] w-[30px] justify-center"}><K x={1083} y={186} h={50}><L d="M1084 189H1142V233H1084Z" /><P d="M1124 195H1138V209ZM1088 213V227H1102Z" f={G} /><L d="M1122 211L1134 199M1092 223L1104 211" s={3} /></K></div>
        <div className={cell + " ml-0.5 w-[30px] justify-center"}><div className="flex w-5 flex-col gap-1.5"><div className="h-0.5 bg-[#e5e5e5]" /><div className="h-0.5 bg-[#e5e5e5]" /><div className="h-0.5 bg-[#e5e5e5]" /></div></div>
      </div>
    </footer>
  );
}

export default function App() {
  return (
    <div className="flex h-[1020px] w-[1919px] flex-col overflow-hidden bg-[#222933] font-['Open_Sans','Noto_Sans',sans-serif] text-[14.500px] leading-5 text-[#f0f0f0]">
      <TitleBar />
      <div className="flex h-[25px] items-center text-[#b4b8be]">
        <div className="mr-[13px] ml-1 flex h-[25px] w-[62px] items-center bg-[#3b4453] pl-[11px] text-white"><Fit w={37}>Inicio</Fit></div>
        <div className="flex gap-[24.600px]">{ribbonTabs.map(([t, w]) => <Fit key={t} w={w}>{t}</Fit>)}</div>
        <div className="ml-[37px] flex h-[9px] w-[19px] items-center justify-center bg-[#f2f2f2]"><Caret up dark className="h-[3px] w-1.5" /></div>
        <Caret className="ml-[5px] h-1 w-1.5" />
      </div>
      <Ribbon />
      <DocTabs />
      <div className="h-[5px] bg-[#3b4453]" />
      <main className="relative h-[752px] bg-[#222830] shadow-[inset_0_1px_0_#1f1f29]">
        <Fit w={252} className="mt-[6px] ml-[3px]">[−][Superior][Estructura alámbrica 2D]</Fit>
        <Drawing />
        <CommandLine />
      </main>
      <div className="h-[5px] bg-[#3b4453]" />
      <StatusBar />
    </div>
  );
}
